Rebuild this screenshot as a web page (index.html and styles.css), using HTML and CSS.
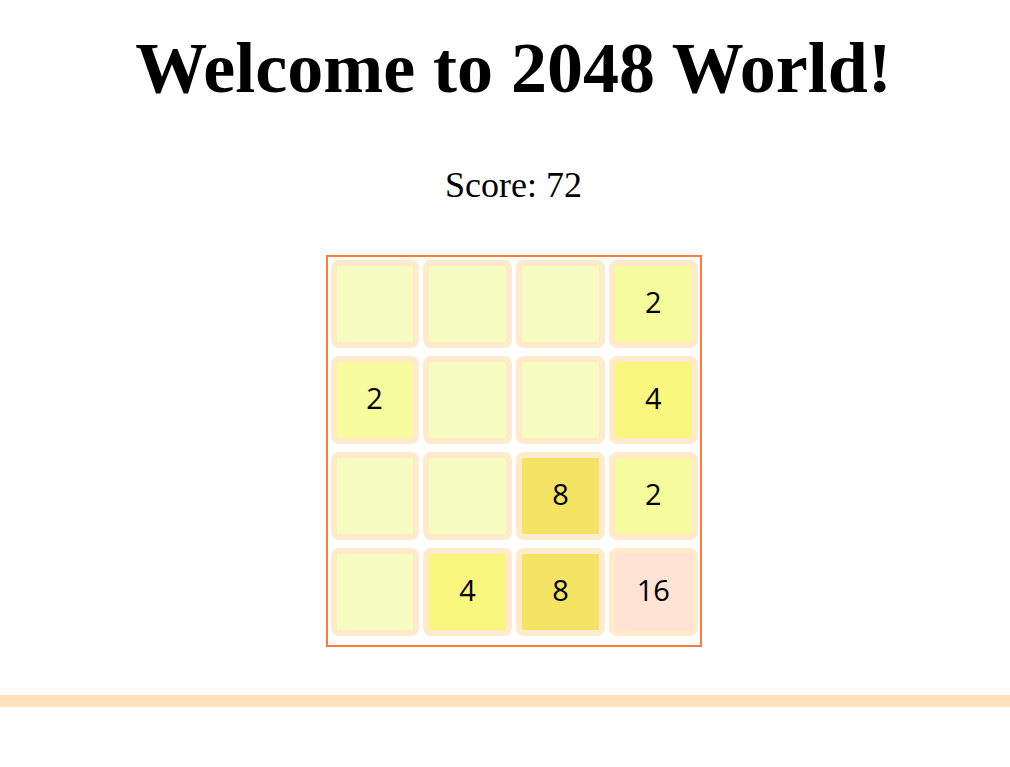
FILE: index.html
```html
<!DOCTYPE html>
<html lang="en">
<head>
<meta charset="utf-8">
<title>2048 World</title>
<link rel="stylesheet" href="styles.css">
</head>
<body>
<main class="page">
  <h1 class="title">Welcome to 2048 World!</h1>
  <p class="score">Score: 72</p>
  <div class="board">
    <div class="tile t0"></div>
    <div class="tile t0"></div>
    <div class="tile t0"></div>
    <div class="tile t2">2</div>

    <div class="tile t2">2</div>
    <div class="tile t0"></div>
    <div class="tile t0"></div>
    <div class="tile t4">4</div>

    <div class="tile t0"></div>
    <div class="tile t0"></div>
    <div class="tile t8">8</div>
    <div class="tile t2">2</div>

    <div class="tile t0"></div>
    <div class="tile t4">4</div>
    <div class="tile t8">8</div>
    <div class="tile t16">16</div>
  </div>
</main>
<div class="bar"></div>
</body>
</html>
```

FILE: styles.css
```css
html, body {
  margin: 0;
  padding: 0;
  background: #ffffff;
}

.page {
  display: flex;
  flex-direction: column;
  align-items: center;
  padding-left: 17px;
  font-family: "Liberation Serif", "Times New Roman", serif;
  color: #000;
}

.title {
  margin: 27px 0 0 0;
  font-size: 72px;
  font-weight: bold;
  line-height: normal;
}

.score {
  margin: 54px 0 0 0;
  font-size: 36px;
  line-height: normal;
}

.board {
  margin-top: 49px;
  box-sizing: border-box;
  width: 376px;
  border: 2px solid #ff7b3d;
  padding: 3px 2px 9px 3px;
  display: grid;
  grid-template-columns: repeat(4, 1fr);
  column-gap: 4.67px;
  row-gap: 8px;
}

.tile {
  box-sizing: border-box;
  height: 88px;
  padding-bottom: 6px;
  border: 6px solid #ffeacb;
  border-radius: 8px;
  display: flex;
  align-items: center;
  justify-content: center;
  font-family: "Open Sans", "Noto Sans", sans-serif;
  font-size: 29px;
  font-weight: 500;
  color: #000;
}

.t0 { background: #f7fdc0; }
.t2 { background: #f6fc9c; }
.t4 { background: #faf77f; }
.t8 { background: #f5e364; }
.t16 { background: #ffe4d5; }

.bar {
  margin-top: 48px;
  height: 12px;
  background: #ffe1bc;
}
```
